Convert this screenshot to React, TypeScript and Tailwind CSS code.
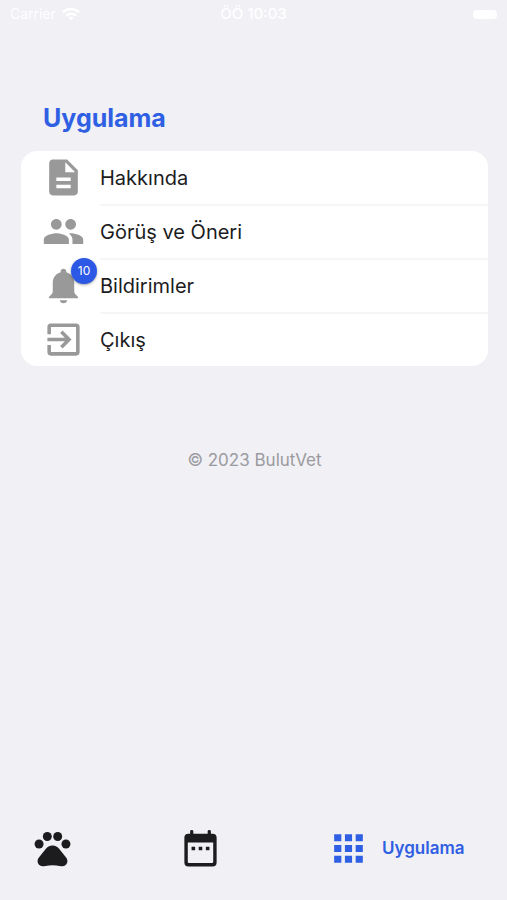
import { MdApps, MdDescription, MdPeople } from 'react-icons/md';
import type { ComponentType } from 'react';

interface IconProps {
  className?: string;
}

interface MenuItem {
  label: string;
  icon: ComponentType<IconProps>;
  badge?: number;
}

function BellIcon({ className }: IconProps) {
  return (
    <svg viewBox="0 0 24 24" fill="currentColor" className={className} aria-hidden="true">
      <path d="M12 2.7c.9 0 1.5.6 1.6 1.5v.4c2.7.8 4.4 3 4.4 6v4.6c0 1 .5 1.6 1.2 2.3l.9.9v.7H3.9v-.7l.9-.9c.7-.7 1.2-1.3 1.2-2.3v-4.6c0-3 1.7-5.2 4.4-6v-.4c.1-.9.7-1.5 1.6-1.5z" />
      <path d="M9.9 20.2h4.2c-.2 1-1 1.7-2.1 1.7s-1.9-.7-2.1-1.7z" />
    </svg>
  );
}

function ExitIcon({ className }: IconProps) {
  return (
    <svg viewBox="0 0 24 24" fill="none" stroke="currentColor" strokeWidth="2" className={className} aria-hidden="true">
      <path d="M4 9V5a1 1 0 0 1 1-1h14a1 1 0 0 1 1 1v14a1 1 0 0 1-1 1H5a1 1 0 0 1-1-1v-4" />
      <path d="M3 12h12M10.800 7.700l4.300 4.300-4.300 4.300" />
    </svg>
  );
}

function PawIcon({ className }: IconProps) {
  return (
    <svg viewBox="0 0 24 24" fill="currentColor" className={className} aria-hidden="true">
      <circle cx="4.500" cy="9.500" r="2.500" />
      <circle cx="9.100" cy="5.300" r="2.500" />
      <circle cx="14.900" cy="5.300" r="2.500" />
      <circle cx="19.500" cy="9.500" r="2.500" />
      <path d="M12 10.300c1.700 0 2.800.8 3.800 2l3.900 4.900c1.100 1.500.7 3.500-.7 4.300-.9.500-1.900.4-3 .2-2.600-.4-5.400-.4-8 0-1.100.2-2.100.3-3-.2-1.400-.8-1.800-2.800-.7-4.300l3.900-4.900c1-1.200 2.100-2 3.800-2z" />
    </svg>
  );
}

function CalendarIcon({ className }: IconProps) {
  return (
    <svg viewBox="0 0 24 24" fill="currentColor" className={className} aria-hidden="true">
      <rect x="6.2" y="1.7" width="1.8" height="4" rx="0.8" />
      <rect x="16" y="1.7" width="1.8" height="4" rx="0.8" />
      <path
        fillRule="evenodd"
        d="M5.2 3.7h13.6A2.2 2.2 0 0 1 21 5.9v13.9a2.2 2.2 0 0 1-2.2 2.2H5.2A2.2 2.2 0 0 1 3 19.8V5.9a2.2 2.2 0 0 1 2.2-2.2zM4.900 8.700v10.500c0 .6.3.9.9.9h12.400c.6 0 .9-.3.9-.9V8.700z"
      />
      <path d="M7 11h2v2H7zM11 11h2v2h-2zM15 11h2v2h-2z" />
    </svg>
  );
}

function WifiIcon({ className }: IconProps) {
  return (
    <svg viewBox="0 0 18 14" fill="none" stroke="currentColor" strokeWidth="2.4" className={className} aria-hidden="true">
      <path d="M1 5.2a11.5 11.5 0 0 1 16 0M4 8.700a7.200 7.200 0 0 1 10 0" />
      <path d="M6.300 10.800a3.900 3.900 0 0 1 5.400 0L9 13.600z" fill="currentColor" stroke="none" />
    </svg>
  );
}

const MENU_ITEMS: MenuItem[] = [
  { label: 'Hakkında', icon: MdDescription },
  { label: 'Görüş ve Öneri', icon: MdPeople },
  { label: 'Bildirimler', icon: BellIcon, badge: 10 },
  { label: 'Çıkış', icon: ExitIcon },
];

function StatusBar() {
  return (
    <header className="grid h-7 grid-cols-3 items-center px-2.5 text-white">
      <div className="flex items-center gap-1.5">
        <span className="text-sm">Carrier</span>
        <WifiIcon className="h-3.5 w-[18px]" />
      </div>
      <span className="text-center text-[15px] font-medium">ÖÖ 10:03</span>
      <div className="h-[9px] w-6 justify-self-end rounded-sm bg-white" />
    </header>
  );
}

function MenuRow({ item, first }: { item: MenuItem; first: boolean }) {
  const Icon = item.icon;

  return (
    <li>
      <button className="flex w-full items-stretch pl-[21px] text-left">
        <span className="relative my-auto mr-[15px] block">
          <Icon className="size-[43px] text-[#999999]" />
          {item.badge && (
            <span className="absolute -top-1.5 -right-3 flex size-[26px] items-center justify-center rounded-full bg-[#2b59e6] text-xs text-white shadow-sm shadow-black/30">
              {item.badge}
            </span>
          )}
        </span>
        <span
          className={`flex flex-1 items-center text-xl text-[#1c1c1e] ${
            first ? 'h-[53px]' : 'h-[54px] border-t-2 border-[#f6f6f8]'
          }`}
        >
          {item.label}
        </span>
      </button>
    </li>
  );
}

function TabBar() {
  return (
    <nav className="grid grid-cols-[148px_148px_1fr] items-center pb-[30px] pl-[31px] text-[#1c1c1e]">
      <button aria-label="Hastalar">
        <PawIcon className="size-[43px]" />
      </button>
      <button aria-label="Takvim">
        <CalendarIcon className="size-[43px]" />
      </button>
      <button className="flex items-center gap-3 text-[#2f5fe3]">
        <MdApps className="size-[43px]" />
        <span className="text-[17px] font-semibold">Uygulama</span>
      </button>
    </nav>
  );
}

export default function App() {
  return (
    <div className="flex min-h-screen flex-col bg-[#f0f0f5] font-['Inter',sans-serif]">
      <StatusBar />
      <main className="flex-1 pt-[74px] pr-[19px] pl-[21px]">
        <h1 className="px-[22px] text-[25px] leading-8 font-bold text-[#2f5fe3]">Uygulama</h1>
        <ul className="mt-[17px] overflow-hidden rounded-2xl bg-white">
          {MENU_ITEMS.map((item, index) => (
            <MenuRow key={item.label} item={item} first={index === 0} />
          ))}
        </ul>
        <p className="mt-20 text-center text-[17px] leading-7 text-[#9b9b9f]">© 2023 BulutVet</p>
      </main>
      <TabBar />
    </div>
  );
}
